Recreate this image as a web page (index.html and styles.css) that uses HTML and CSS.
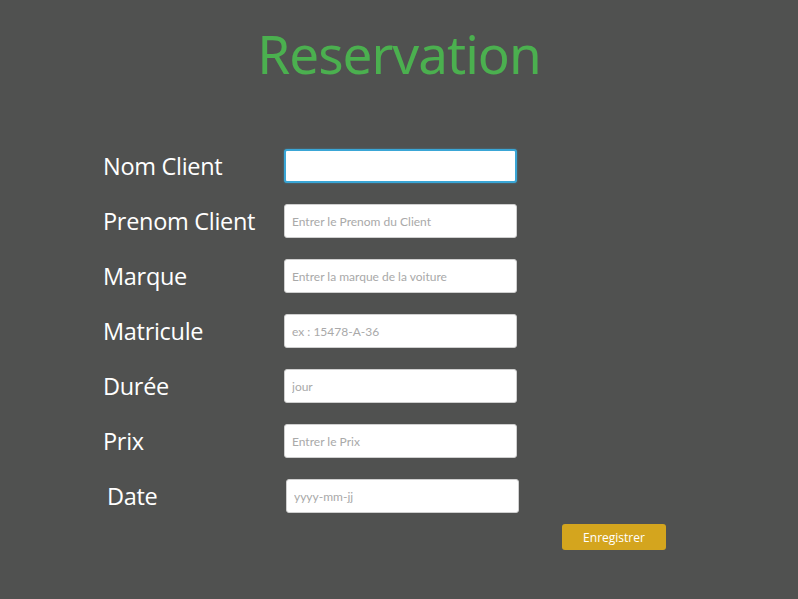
FILE: index.html
```html
<!DOCTYPE html>
<html lang="fr">
<head>
<meta charset="utf-8">
<title>Reservation</title>
<link rel="stylesheet" href="styles.css">
</head>
<body>
<main class="page">
  <h1 class="title">Reservation</h1>
  <form class="form">
    <div class="row"><label class="label">Nom Client</label><input class="field focused" type="text"></div>
    <div class="row"><label class="label">Prenom Client</label><input class="field" type="text" placeholder="Entrer le Prenom du Client"></div>
    <div class="row"><label class="label">Marque</label><input class="field" type="text" placeholder="Entrer la marque de la voiture"></div>
    <div class="row"><label class="label">Matricule</label><input class="field" type="text" placeholder="ex : 15478-A-36"></div>
    <div class="row"><label class="label">Durée</label><input class="field" type="text" placeholder="jour"></div>
    <div class="row"><label class="label">Prix</label><input class="field" type="text" placeholder="Entrer le Prix"></div>
    <div class="row row-date"><label class="label">Date</label><input class="field" type="text" placeholder="yyyy-mm-jj"></div>
    <div class="actions"><button class="btn" type="button">Enregistrer</button></div>
  </form>
</main>
</body>
</html>
```
FILE: styles.css
```css
* { box-sizing: border-box; }
html, body { margin: 0; padding: 0; }
body {
  background: #505150;
  width: 798px;
  height: 599px;
  overflow: hidden;
  font-family: "Open Sans", "Noto Sans", sans-serif;
}
.page { padding-top: 18px; }
.title {
  margin: 0;
  text-align: center;
  color: #4bb04f;
  font-family: "Noto Sans", sans-serif;
  font-weight: 400;
  font-size: 53px;
  line-height: 72px;
  letter-spacing: -1px;
}
.form {
  margin-top: 59px;
  padding-left: 103px;
  display: flex;
  flex-direction: column;
  gap: 21px;
}
.row {
  display: flex;
  align-items: center;
  height: 34px;
}
.label {
  width: 181px;
  color: #ffffff;
  font-size: 23.5px;
  letter-spacing: -0.3px;
}
.field {
  width: 233px;
  height: 34px;
  border: 1px solid #cfcfcf;
  border-radius: 3px;
  background: #ffffff;
  padding: 0 7px;
  font-family: "Lato", sans-serif;
  font-size: 12px;
  color: #333;
  outline: none;
}
.field::placeholder { color: #a9a9a9; }
.field.focused {
  border: 2px solid #3aa6d6;
  box-shadow: 0 0 2px rgba(58,166,214,0.6);
}
.row-date .label { padding-left: 4px; width: 183px; }
.actions {
  display: flex;
  justify-content: flex-start;
  padding-left: 459px;
  margin-top: -10px;
}
.btn {
  width: 104px;
  height: 26px;
  background: #d4a51e;
  border: none;
  border-radius: 3px;
  color: #ffffff;
  font-family: "Open Sans", sans-serif;
  font-size: 12px;
  padding: 0;
}
```
